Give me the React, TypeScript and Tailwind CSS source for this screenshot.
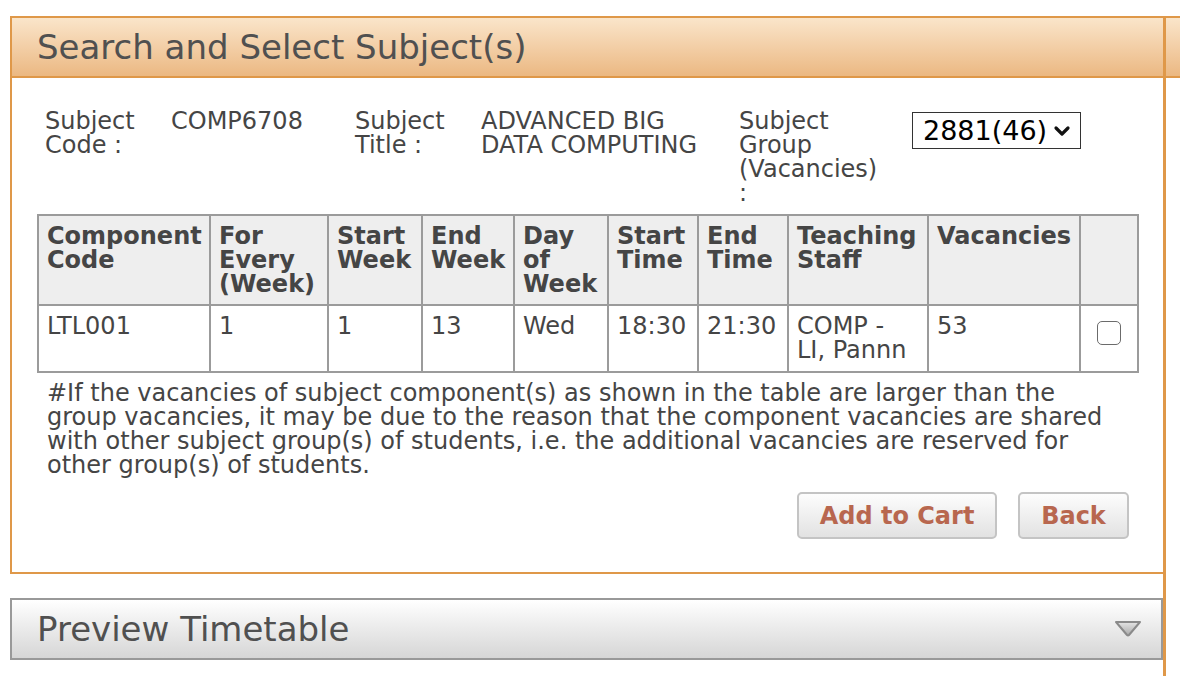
import React from "react";

const headers = [
  "Component Code",
  "For Every (Week)",
  "Start Week",
  "End Week",
  "Day of Week",
  "Start Time",
  "End Time",
  "Teaching Staff",
  "Vacancies",
  "",
];

const colWidths = [172, 118, 94, 92, 94, 90, 90, 140, 152, 58];

const row = ["LTL001", "1", "1", "13", "Wed", "18:30", "21:30", "COMP - LI, Pannn", "53"];

export default function App() {
  return (
    <div className="relative min-h-[676px] overflow-hidden bg-white font-['DejaVu_Sans',Verdana,sans-serif] text-[#454545]">
      <div className="pl-[10px] pt-[16px]">
        {/* Search panel */}
        <section className="w-[1155px] border-b-2 border-l-2 border-[#df9849]">
          <div className="-mr-[40px] flex h-[62px] items-center border-y-2 border-[#df9849] bg-gradient-to-b from-[#fae5ca] to-[#ebb882] pl-[25px]">
            <h1 className="text-[34px] leading-none text-[#505050]">Search and Select Subject(s)</h1>
          </div>

          <div className="px-[25px] pb-[33px] pt-[31px]">
            {/* Subject info */}
            <div className="flex items-start text-[24px] leading-[24px]">
              <div className="w-[126px] px-2">Subject Code :</div>
              <div className="w-[184px] px-2">COMP6708</div>
              <div className="w-[126px] px-2">Subject Title :</div>
              <div className="w-[258px] px-2">
                <div className="w-[235px]">ADVANCED BIG DATA COMPUTING</div>
              </div>
              <div className="w-[181px] px-2">
                <div className="w-[150px]">Subject Group (Vacancies) :</div>
              </div>
              <div className="mt-[3px] flex h-[37px] w-[169px] items-center gap-[6px] border-[1.5px] border-[#333] pl-[10px] text-[27px] text-black">
                <span>2881(46)</span>
                <svg width="18" height="12" viewBox="0 0 18 12">
                  <polyline points="3,3 9,9 15,3" fill="none" stroke="#111" strokeWidth="3.2" strokeLinecap="round" strokeLinejoin="round" />
                </svg>
              </div>
            </div>

            {/* Components table */}
            <table className="mt-[9px] w-[1100px] table-fixed border-collapse text-[24px] leading-[24px]">
              <colgroup>
                {colWidths.map((w, i) => (
                  <col key={i} style={{ width: w }} />
                ))}
              </colgroup>
              <thead>
                <tr className="bg-[#eeeeee]">
                  {headers.map((h, i) => (
                    <th key={i} className="border-2 border-[#9b9b9b] px-2 pb-2 pt-2 text-left align-top font-bold">
                      {h}
                    </th>
                  ))}
                </tr>
              </thead>
              <tbody>
                <tr>
                  {row.map((c, i) => (
                    <td key={i} className="h-[67px] border-2 border-[#9b9b9b] px-2 py-2 align-top">
                      {c}
                    </td>
                  ))}
                  <td className="border-2 border-[#9b9b9b] px-2 py-2 align-top">
                    <div className="ml-[8px] mt-[7px] h-[24px] w-[24px] rounded-[5px] border-[1.5px] border-[#6b6b6b] bg-white" />
                  </td>
                </tr>
              </tbody>
            </table>

            <p className="mt-[8px] w-[1090px] pl-[10px] text-[24px] leading-[24px]">
              #If the vacancies of subject component(s) as shown in the table are larger than the group vacancies, it may be due to the reason that the component vacancies are shared with other subject group(s) of students, i.e. the additional vacancies are reserved for other group(s) of students.
            </p>

            <div className="mt-[15px] flex justify-end gap-[21px] pr-[11px]">
              <button className="h-[47px] w-[200px] rounded-[5px] border-2 border-[#c4c4c4] bg-gradient-to-b from-[#fdfdfd] to-[#e2e2e2] text-[24px] font-bold text-[#b8674f]">
                Add to Cart
              </button>
              <button className="h-[47px] w-[111px] rounded-[5px] border-2 border-[#c4c4c4] bg-gradient-to-b from-[#fdfdfd] to-[#e2e2e2] text-[24px] font-bold text-[#b8674f]">
                Back
              </button>
            </div>
          </div>
        </section>

        {/* Preview timetable panel */}
        <div className="mt-[24px] flex h-[62px] w-[1153px] items-center justify-between border-2 border-[#999999] bg-gradient-to-b from-[#ffffff] to-[#d6d6d6] pl-[25px] pr-[18px]">
          <span className="text-[34px] leading-none text-[#505050]">Preview Timetable</span>
          <svg width="30" height="22" viewBox="0 0 30 22">
            <defs>
              <linearGradient id="tri" x1="0" y1="0" x2="0" y2="1">
                <stop offset="0" stopColor="#e4e4e4" />
                <stop offset="1" stopColor="#a9a9a9" />
              </linearGradient>
            </defs>
            <path d="M3 4 L27 4 L16 17 Q15 18 14 17 Z" fill="url(#tri)" stroke="#8a8a8a" strokeWidth="2" strokeLinejoin="round" />
          </svg>
        </div>
      </div>

      {/* orange rule running down the right side */}
      <div className="absolute bottom-0 left-[1163px] top-[16px] w-[3px] bg-[#df9849]" />
    </div>
  );
}
